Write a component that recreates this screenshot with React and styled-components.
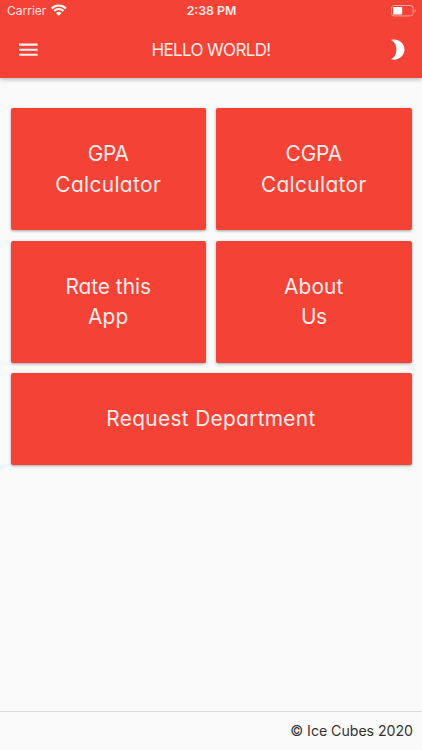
import React, { useState } from "react";
import styled, { createGlobalStyle } from "styled-components";

const cards = [
  { lines: ["GPA", "Calculator"], spacing: [-0.2, 0.4] },
  { lines: ["CGPA", "Calculator"], spacing: [-0.1, 0.4] },
  { lines: ["Rate this", "App"], spacing: [0, 0.2] },
  { lines: ["About", "Us"], spacing: [0.2, -0.4] },
  { lines: ["Request Department"], spacing: [0.35], wide: true },
];

const App = () => {
  const [active, setActive] = useState(null);

  return (
    <Screen>
      <GlobalStyle />
      <Header>
        <StatusBar>
          <Carrier>
            <CarrierName>Carrier</CarrierName>
            <WifiIcon viewBox="0 0 16 12">
              <path d="M.7 4.4a10.4 10.4 0 0 1 14.6 0M3.2 7a6.9 6.9 0 0 1 9.6 0" />
              <path d="M8 12 5.1 9.2a4.1 4.1 0 0 1 5.8 0Z" className="dot" />
            </WifiIcon>
          </Carrier>
          <Time>2:38 PM</Time>
          <BatteryIcon viewBox="0 0 26 12">
            <rect x="0.5" y="0.5" width="21.6" height="10.4" rx="2.6" />
            <rect x="2" y="2" width="9.2" height="7.4" rx="1" className="level" />
            <path d="M23.7 4v3.6c1.3-.5 1.3-3.1 0-3.6Z" className="cap" />
          </BatteryIcon>
        </StatusBar>
        <NavBar>
          <IconButton aria-label="Menu">
            <MenuIcon viewBox="0 0 19 14">
              <path d="M0 1.6h18.6M0 6.7h18.6M0 11.8h18.6" />
            </MenuIcon>
          </IconButton>
          <Title>HELLO WORLD!</Title>
          <IconButton aria-label="Dark mode" $end>
            <MoonIcon viewBox="0 0 14 22">
              <path d="M0 .9C6.4-.9 13.5 3.5 13.5 10.6S6.4 22.1 0 20.3C7.3 16.9 7.3 4.3 0 .9Z" />
            </MoonIcon>
          </IconButton>
        </NavBar>
      </Header>

      <Grid>
        {cards.map((card, index) => (
          <Card
            key={index}
            $wide={card.wide}
            $active={active === index}
            onClick={() => setActive(index)}
          >
            {card.lines.map((line, i) => (
              <CardLabel key={line} $spacing={card.spacing[i]}>
                {line}
              </CardLabel>
            ))}
          </Card>
        ))}
      </Grid>

      <Footer>
        <Copyright>© Ice Cubes 2020</Copyright>
      </Footer>
    </Screen>
  );
};

const GlobalStyle = createGlobalStyle`
  * {
    box-sizing: border-box;
  }

  body {
    margin: 0;
    background: #fafafa;
    font-family: Inter, "Liberation Sans", sans-serif;
    /* single-storey a */
    font-feature-settings: "cv11";
  }
`;

const Screen = styled.div`
  display: flex;
  flex-direction: column;
  height: 100vh;
  min-height: 750px;
  background: #fafafa;
`;

const Header = styled.header`
  height: 77.5px;
  flex-shrink: 0;
  color: #fff;
  background: #f44336;
  box-shadow: 0 1px 5px rgba(0, 0, 0, 0.32);
`;

const StatusBar = styled.div`
  display: grid;
  grid-template-columns: 1fr auto 1fr;
  align-items: center;
  height: 22px;
  padding: 0 6px 0 7px;
`;

const Carrier = styled.div`
  display: flex;
  align-items: center;
  gap: 5px;
`;

const CarrierName = styled.span`
  font-size: 12px;
  line-height: 22px;
  color: #ffe3e0;
  font-feature-settings: normal;
`;

const WifiIcon = styled.svg`
  width: 15.5px;
  height: 12px;
  margin-top: -2px;
  fill: none;
  stroke: #fff;
  stroke-width: 2.1;

  .dot {
    fill: #fff;
    stroke: none;
  }
`;

const Time = styled.span`
  font-size: 12.3px;
  font-weight: 600;
  line-height: 22px;
  color: #ffe9e7;
`;

const BatteryIcon = styled.svg`
  justify-self: end;
  width: 26px;
  height: 12px;
  margin-right: -1px;
  fill: none;
  stroke: #faa19b;
  stroke-width: 1;

  .level {
    fill: #fff;
    stroke: none;
  }

  .cap {
    fill: #faa19b;
    stroke: none;
  }
`;

const NavBar = styled.div`
  display: grid;
  grid-template-columns: 60px 1fr 60px;
  align-items: center;
  height: 55px;
  padding: 0 17px 0 19px;
`;

const IconButton = styled.button`
  display: flex;
  justify-content: ${({ $end }) => ($end ? "flex-end" : "flex-start")};
  padding: 0;
  border: none;
  background: none;
  cursor: pointer;
`;

const MenuIcon = styled.svg`
  width: 19px;
  height: 14px;
  fill: none;
  stroke: #fff1f0;
  stroke-width: 2.1;
`;

const MoonIcon = styled.svg`
  width: 14px;
  height: 22px;
  fill: #fff;
`;

const Title = styled.h1`
  margin: 0 2px 0 0;
  font-size: 17px;
  font-weight: 400;
  line-height: 24px;
  letter-spacing: -0.65px;
  text-align: center;
  white-space: nowrap;
  color: #ffeceb;
`;

const Grid = styled.main`
  display: grid;
  grid-template-columns: 1fr 1fr;
  grid-template-rows: 122.3px 122.3px 91.5px;
  gap: 10.2px;
  padding: 30.6px 10.5px 0;
`;

const Card = styled.button`
  grid-column: ${({ $wide }) => ($wide ? "1 / -1" : "auto")};
  display: flex;
  flex-direction: column;
  align-items: center;
  justify-content: center;
  padding: 1px 0 0;
  border: none;
  border-radius: 2px;
  font-family: inherit;
  font-feature-settings: inherit;
  color: #ffeceb;
  background: ${({ $active }) => ($active ? "#e53935" : "#f44336")};
  box-shadow: 0 1px 3px rgba(0, 0, 0, 0.36);
  cursor: pointer;
`;

const CardLabel = styled.span`
  font-size: 20.8px;
  line-height: 30.6px;
  letter-spacing: ${({ $spacing }) => $spacing}px;
`;

const Footer = styled.footer`
  display: flex;
  align-items: center;
  justify-content: flex-end;
  height: 39px;
  margin-top: auto;
  padding: 0 9px;
  border-top: 1px solid #dcdcdc;
`;

const Copyright = styled.span`
  font-size: 14.2px;
  line-height: 20px;
  letter-spacing: -0.05px;
  color: #333;
`;

export default App;
